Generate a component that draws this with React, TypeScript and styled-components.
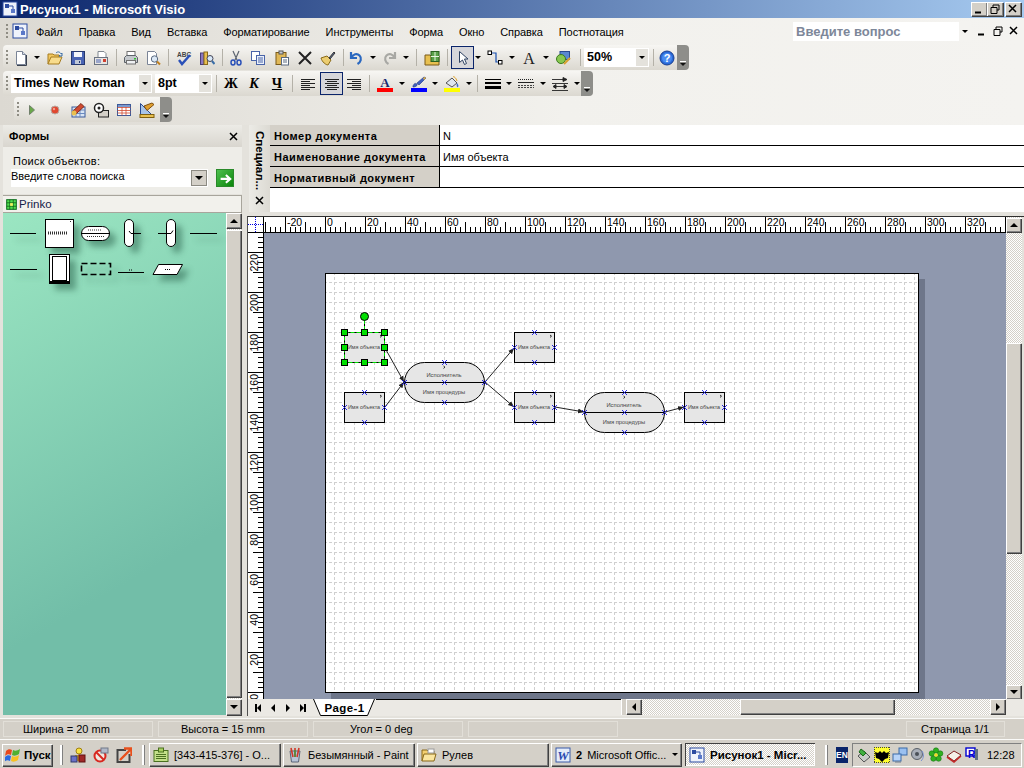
import React from 'react';
import styled, { createGlobalStyle, css } from 'styled-components';

const UI = `"Liberation Sans", Arial, sans-serif`;

const GlobalStyle = createGlobalStyle`
  html, body { margin: 0; padding: 0; }
  body { font-family: ${UI}; font-size: 11px; color: #000; overflow: hidden; }
  * { box-sizing: border-box; }
`;

const bevel = css`
  background-color: #d4d0c8;
  box-shadow: inset 1px 1px 0 #fff, inset -1px -1px 0 #808080, 1px 1px 0 #404040;
`;

const dither = css`
  background: repeating-conic-gradient(#d4d0c8 0 25%, #fff 0 50%) 0 0 / 2px 2px;
`;

// ---------- icons ----------
const ICONS: Record<string, React.ReactNode> = {
  visio: (<><rect x="1" y="1" width="14" height="14" fill="#eef2fb" stroke="#2b4aa0" /><rect x="3" y="3" width="4" height="4" fill="#2b4aa0" /><rect x="9" y="8" width="4" height="4" fill="#5a78c8" /><path d="M7 5h4v3" fill="none" stroke="#2b4aa0" /></>),
  new: (<><path d="M3.5 1.5h6l3 3v10h-9z" fill="#fff" stroke="#7a8496" /><path d="M9.5 1.5v3h3" fill="#d8deea" stroke="#7a8496" /><path d="M13.5 5v10.5H4" fill="none" stroke="#39414f" /></>),
  open: (<><path d="M1 14V4h5l1 1h5v2" fill="#f2c860" stroke="#a67c20" /><path d="M1 14l3-7h11l-3 7z" fill="#f8dc8c" stroke="#a67c20" /><path d="M9 3c2-2 4-1 5 1l1-1v3h-3l1-1" fill="none" stroke="#3a6ea8" /></>),
  save: (<><rect x="1.5" y="1.5" width="13" height="13" fill="#4a64b4" stroke="#26386e" /><rect x="4" y="2" width="8" height="5" fill="#f4f6fb" /><rect x="5" y="10" width="6" height="4" fill="#c0c8d8" /><rect x="9" y="11" width="1" height="2" fill="#26386e" /></>),
  mail: (<><path d="M5 1.5h6l2 2v4H5z" fill="#fff" stroke="#808890" /><rect x="1.5" y="7.5" width="13" height="7" fill="#e8e6e2" stroke="#6a7280" /><path d="M3 10h5M3 12h5" stroke="#4a64b4" /><rect x="10" y="9" width="3" height="3" fill="#d04030" /></>),
  print: (<><rect x="4" y="1.5" width="8" height="5" fill="#fff" stroke="#707070" /><path d="M1.5 7.5l2-2h9l2 2v5h-13z" fill="#c4c8cc" stroke="#5c6268" /><rect x="3.5" y="10.5" width="9" height="3.5" fill="#eef0f2" stroke="#707070" /><rect x="11" y="8" width="2" height="1.5" fill="#30c030" /></>),
  preview: (<><path d="M2.5 1.5h7l2 2v11h-9z" fill="#fff" stroke="#7a8496" /><circle cx="9.5" cy="9" r="3.2" fill="#dbe8f6" stroke="#5a6a80" /><path d="M12 11.5l3 3" stroke="#c08020" strokeWidth="2" /></>),
  spell: (<><text x="1" y="6.5" fontSize="6.5" fontWeight="700" fontFamily={UI} fill="#444">ABC</text><path d="M3 10l3 4 8-9" fill="none" stroke="#2a50b8" strokeWidth="2.4" /></>),
  research: (<><rect x="1.5" y="3" width="3.5" height="11.5" fill="#8a78c0" stroke="#4a3e78" /><rect x="5" y="2" width="3.5" height="12.5" fill="#e8c050" stroke="#8a6a18" /><circle cx="11" cy="8.5" r="3" fill="#d8e8f8" stroke="#445" /><path d="M13 11l2.5 3" stroke="#3a6ea8" strokeWidth="2" /></>),
  cut: (<><path d="M5 1l4 9M11 1L7 10" stroke="#5c6470" strokeWidth="1.2" /><ellipse cx="5" cy="12.5" rx="2" ry="2.5" fill="none" stroke="#2a50b8" strokeWidth="1.5" /><ellipse cx="11" cy="12.5" rx="2" ry="2.5" fill="none" stroke="#2a50b8" strokeWidth="1.5" /></>),
  copy: (<><rect x="1.5" y="1.5" width="8" height="9" fill="#fff" stroke="#4a64a8" /><rect x="6.5" y="5.5" width="8" height="9" fill="#eaf0fa" stroke="#4a64a8" /><path d="M8 8h5M8 10h5M8 12h5" stroke="#4a64a8" /></>),
  paste: (<><rect x="2" y="2.5" width="10" height="12" fill="#e0b858" stroke="#7a5a18" /><rect x="5" y="1" width="4" height="3" fill="#c8ccd4" stroke="#555" /><rect x="7.5" y="7.5" width="7" height="7.5" fill="#fff" stroke="#5a6a80" /><path d="M9 10h4M9 12h4" stroke="#5a6a80" /></>),
  del: (<path d="M2 2l12 12M14 2L2 14" stroke="#222" strokeWidth="2" />),
  brush: (<><path d="M1 8l6-2 4 4-3 5c-2 0-6-3-7-7z" fill="#eccd70" stroke="#8a6a18" /><path d="M9 8l5-6 1 1-5 6z" fill="#5a6a90" stroke="#333" /></>),
  undo: (<path d="M3 2v6h6M3.5 8C5 4 9 3 11.5 5.5s1.5 6.5-2 8.5" fill="none" stroke="#2a68c0" strokeWidth="2.2" />),
  redo: (<path d="M13 2v6H7M12.5 8C11 4 7 3 4.5 5.5s-1.5 6.5 2 8.5" fill="none" stroke="#a8a8a4" strokeWidth="2.2" />),
  shapes: (<><path d="M1 15V5h5l1 1h8v9z" fill="#e8c050" stroke="#7a5a18" /><rect x="7" y="1.5" width="8" height="10" fill="#5aa048" stroke="#2a6020" /><path d="M11 2v9M7 6.5h8" stroke="#e8f4e0" /></>),
  pointer: (<path d="M4.5 1.5v11l3-2.5 2 4.5 2-1-2-4.5h3.5z" fill="#fff" stroke="#2c4060" />),
  connector: (<><path d="M3 3h6v9h3" fill="none" stroke="#1a50b0" strokeWidth="1.2" /><rect x="1" y="1" width="3.5" height="3.5" fill="#fff" stroke="#000" /><rect x="11.5" y="10.5" width="3.5" height="3.5" fill="#fff" stroke="#000" /></>),
  textA: (<text x="8" y="14" textAnchor="middle" fontSize="16" fontFamily={`"Liberation Serif", serif`} fill="#222">A</text>),
  shape: (<><rect x="5" y="1.5" width="9.5" height="8" fill="#5a88d0" stroke="#2a4a90" /><circle cx="6" cy="9" r="4.5" fill="#88c850" stroke="#3a7a20" /><path d="M9 14l6-6" stroke="#d8a030" strokeWidth="2" /></>),
  help: (<><circle cx="8" cy="8" r="7" fill="#2a6ad8" stroke="#1a3e90" /><circle cx="8" cy="8" r="5" fill="#4a8cf0" /><text x="8" y="12" textAnchor="middle" fontSize="11" fontWeight="700" fontFamily={UI} fill="#fff">?</text></>),
  alignL: (<path d="M1 3.5h14M1 5.5h9M1 7.5h14M1 9.5h9M1 11.5h14M1 13.5h9" stroke="#222" />),
  alignC: (<path d="M1 3.5h14M3 5.5h10M1 7.5h14M3 9.5h10M1 11.5h14M3 13.5h10" stroke="#222" />),
  alignR: (<path d="M1 3.5h14M6 5.5h9M1 7.5h14M6 9.5h9M1 11.5h14M6 13.5h9" stroke="#222" />),
  colorA: (<><text x="8" y="10.5" textAnchor="middle" fontSize="13" fontWeight="700" fontFamily={`"Liberation Serif", serif`} fill="#1a2a70">A</text><rect x="0" y="12" width="16" height="4" fill="#f00" /></>),
  lineColor: (<><path d="M2 10c1-3 3-3 4-2s-1 3-4 3zM6 7l7-6 2 1-7 7z" fill="#4060c0" stroke="#284090" strokeWidth=".7" /><path d="M12 2l2-1 1 1-2 2z" fill="#e0b040" /><rect x="0" y="12" width="16" height="4" fill="#00f" /></>),
  fill: (<><path d="M2 7l6-5 5 5-5 4z" fill="#dfe6ee" stroke="#555" /><path d="M13 7c1 1 2 3 1 4s-2-2-1-4z" fill="#3a70c8" /><path d="M9 1c1-1 3 1 4 4" fill="none" stroke="#e0a020" /><rect x="0" y="12" width="16" height="4" fill="#ff0" /></>),
  weight: (<><rect x="0" y="3" width="16" height="1" fill="#000" /><rect x="0" y="6" width="16" height="2" fill="#000" /><rect x="0" y="10" width="16" height="3" fill="#000" /></>),
  dash: (<><path d="M0 3.5h16" stroke="#222" strokeDasharray="1 1" /><path d="M0 6.5h16" stroke="#222" /><path d="M0 9.5h16M0 11.5h16" stroke="#444" strokeDasharray="2 1" /></>),
  arrows: (<path d="M0 3.5h14M11 1.5l4 2-4 2zM0 7.5h16M2 10.5h12M4 8.5l-3 2 3 2zM12 8.5l3 2-3 2zM0 14.5h16" stroke="#222" fill="#222" strokeWidth=".9" />),
  play: (<path d="M5.5 3.5l5 4.5-5 4.5z" fill="#6aa84a" stroke="#70806a" />),
  record: (<><circle cx="8" cy="8" r="4" fill="#e04830" stroke="#b8a8a0" /><circle cx="7" cy="7" r="1.2" fill="#f0a090" /></>),
  macro: (<><rect x="2" y="5" width="13" height="10" fill="#d8e4f4" stroke="#3a5a9a" /><path d="M2 8h13M6 8v7M10 8v7M2 11.5h13" stroke="#6a8ac0" /><path d="M2 10L11 1.5l3 3L6 12z" fill="#d04a30" stroke="#802818" /><circle cx="4" cy="11" r="2.5" fill="#e8c050" /></>),
  rotate: (<><rect x="5.5" y="8.5" width="10" height="6.5" fill="#d4d0c8" stroke="#222" /><circle cx="6" cy="6" r="4.5" fill="#fff" stroke="#222" strokeWidth="1.5" /><circle cx="6" cy="6" r="1.5" fill="#222" /></>),
  table: (<><rect x="1.5" y="2.5" width="13" height="11" fill="#fff" stroke="#3a5a9a" /><path d="M1.5 5.5h13M1.5 8.5h13M1.5 11h13M6 2.5v11M10 2.5v11" stroke="#d04a30" strokeWidth=".8" /><rect x="2" y="3" width="12" height="2" fill="#7a9ad0" /></>),
  ruler: (<><path d="M1.5 1.5v11h11z" fill="#a8c4e8" stroke="#2a4a90" /><path d="M5 4l8-3 2 1.5-7 6z" fill="#e0a030" stroke="#805010" /><rect x="1" y="12.5" width="14" height="3" fill="#e8c050" stroke="#806010" /></>),
  grid: (<><rect x="1" y="1" width="14" height="14" fill="#50e050" stroke="#107020" strokeWidth="1.5" /><path d="M1 5.5h14M1 10.5h14M5.5 1v14M10.5 1v14" stroke="#0a5010" /><rect x="6" y="6" width="4" height="4" fill="#f0f060" /></>),
  go: (<path d="M3 9h10M9 4.5L14 9l-5 4.5" fill="none" stroke="#fff" strokeWidth="2.4" />),
  flag: (<><path d="M1 4c2-2 4-2 6-1l-1 5C4 7 2 7 0 9z" fill="#e8481c" /><path d="M8 3c2 1 4 1 7-1l-1 5c-3 2-5 2-7 1z" fill="#50b030" /><path d="M0 10c2-2 4-2 6-1l-1 5c-2-1-4-1-6 1z" fill="#2a6ae0" /><path d="M7 9c2 1 4 1 7-1l-1 5c-3 2-5 2-7 1z" fill="#f8c020" /></>),
  people: (<><circle cx="9" cy="4" r="3" fill="#f8e040" stroke="#a08010" /><path d="M5 8h7l1 6H4z" fill="#d8a020" /><rect x="1" y="9" width="6" height="6" fill="#6a70c8" stroke="#30386a" /><rect x="9" y="8" width="6" height="7" fill="#a02828" stroke="#601010" /></>),
  noSign: (<><circle cx="7" cy="9" r="5.5" fill="#f0e8e0" stroke="#d82820" strokeWidth="2" /><path d="M3 5l8 8" stroke="#d82820" strokeWidth="2" /><rect x="8" y="1" width="7" height="5" fill="#b0b8c8" stroke="#707888" /></>),
  arrowBox: (<><path d="M10 3H1.5v12h12V7" fill="none" stroke="#444" strokeWidth="2" /><path d="M4 13L15 2M8 1.5h7.5V9" fill="none" stroke="#e8501c" strokeWidth="2.4" /></>),
  note: (<><rect x="1" y="3.5" width="14" height="11" fill="#c4e08a" stroke="#4a7020" /><rect x="5.5" y="1" width="5" height="4" fill="#a8d060" stroke="#4a7020" /><path d="M3 7.5h10M3 9.5h10M3 11.5h10" stroke="#4a7020" /></>),
  paint: (<><path d="M3 4h10l-1.5 11h-7z" fill="#b8c4d8" stroke="#5a6478" /><path d="M6 10L4 1M8 10V1M10 10l2-9" stroke="#d03828" strokeWidth="1.6" /><path d="M8 10V3" stroke="#30a040" strokeWidth="1.4" /></>),
  folder: (<><path d="M1 14V3h5l1 1h6v3" fill="#f4d070" stroke="#8a6818" /><path d="M1 14l2-7h12l-2 7z" fill="#fbe6a0" stroke="#8a6818" /><rect x="7" y="2" width="6" height="4" fill="#fff" stroke="#999" /></>),
  word: (<><rect x="1" y="1" width="14" height="14" fill="#e4ecfa" stroke="#3a5aa8" /><text x="8" y="12.5" textAnchor="middle" fontSize="13" fontWeight="700" fontStyle="italic" fontFamily={`"Liberation Serif", serif`} fill="#2a4ab0">W</text></>),
  plug: (<><path d="M2 9l6 6 6-5-6-6z" fill="#c8ccc8" stroke="#555" /><path d="M5 2l5 4-3 3-4-4z" fill="#40b040" stroke="#1a6a1a" /></>),
  bat: (<><rect x="0" y="0" width="16" height="16" fill="#ffff30" /><path d="M1 5l3 1 2-2 2 2 2-2 2 2 3-1-1 6-3 1-3 3-3-3-3-1z" fill="#000" /><path d="M0 .5h16M0 15.5h16M.5 0v16M15.5 0v16" stroke="#444" strokeDasharray="1 1" /></>),
  net: (<><rect x="7" y="1" width="8" height="7" fill="#9ac0f0" stroke="#3a6aa8" /><rect x="1" y="7" width="8" height="7" fill="#b8d4f8" stroke="#3a6aa8" /><path d="M3 15h6" stroke="#6a7a90" /></>),
  speaker: (<><circle cx="7" cy="7" r="5.5" fill="#a8aeb8" stroke="#5a6068" /><circle cx="7" cy="7" r="2" fill="#4a5058" /><path d="M12 4c2 3 2 7-1 10" fill="none" stroke="#7a90d0" /></>),
  icq: (<><g fill="#30b020" stroke="#0a6a0a" strokeWidth=".5"><circle cx="8" cy="3.5" r="2.7" /><circle cx="12.2" cy="6.5" r="2.7" /><circle cx="10.6" cy="11.6" r="2.7" /><circle cx="5.4" cy="11.6" r="2.7" /><circle cx="3.8" cy="6.5" r="2.7" /></g><circle cx="8" cy="8" r="1.8" fill="#f0e020" /></>),
  book: (<><path d="M1 9l7-5 7 4-7 6z" fill="#f4f0e8" stroke="#802020" /><path d="M1 10l7 5 7-6" fill="none" stroke="#c02828" strokeWidth="1.6" /></>),
  pc: (<><rect x="2" y="1" width="9" height="8" fill="#fff" stroke="#0000d0" strokeWidth="1.4" /><text x="4" y="11" fontSize="10" fontWeight="700" fontFamily={UI} fill="#0000d0">R</text><rect x="11" y="2" width="3" height="11" fill="#607080" /></>),
};

const Svg = styled.svg<{ $s: number }>`
  display: block;
  flex: none;
  width: ${(p) => p.$s}px;
  height: ${(p) => p.$s}px;
`;

const Icon = ({ name, size = 16 }: { name: string; size?: number }) => (
  <Svg $s={size} viewBox="0 0 16 16">{ICONS[name]}</Svg>
);

// ---------- title and menu ----------
const Window = styled.div`
  display: flex;
  flex-direction: column;
  width: 1024px;
  height: 768px;
  overflow: hidden;
  background: #e4e2dc;
`;

const TitleBar = styled.div`
  display: flex;
  align-items: center;
  height: 18px;
  flex: none;
  padding-left: 2px;
  background: linear-gradient(90deg, #0a246a, #a6caf0);
  color: #fff;
  font-weight: 700;
  font-size: 13px;
`;

const TitleText = styled.span`
  margin-left: 2px;
`;

const CaptionButtons = styled.div`
  display: flex;
  margin-left: auto;
  margin-right: 3px;
`;

const CaptionButton = styled.div<{ $gap?: number }>`
  ${bevel}
  width: 16px;
  height: 14px;
  margin-left: ${(p) => p.$gap ?? 0}px;
  display: flex;
  align-items: center;
  justify-content: center;
`;

const TopArea = styled.div`
  flex: none;
  height: 107px;
  background: linear-gradient(90deg, #dcd9d2, #f2f1ed 55%, #f4f3f0);
`;

const MenuBar = styled.div`
  display: flex;
  align-items: center;
  height: 26px;
  padding-left: 6px;
`;

const MenuIcon = styled.div`
  margin: 0 0 0 2px;
`;

const MenuItem = styled.span`
  padding: 0 8px;
  margin-top: 2px;
  font-size: 11px;
  letter-spacing: -0.09px;
`;

const HelpBox = styled.div`
  display: flex;
  align-items: center;
  width: 178px;
  height: 19px;
  margin-left: auto;
  background: #fff;
  color: #7d8799;
  font-weight: 700;
  font-size: 13px;
  padding-left: 3px;
`;

const HelpDrop = styled.div`
  display: flex;
  align-items: center;
  justify-content: center;
  margin-left: auto;
  width: 12px;
  height: 19px;
  background: #f4f3f0;
`;

const DocButtons = styled.div`
  display: flex;
  align-items: center;
  width: 53px;
  padding-left: 6px;
  gap: 6px;
`;

const ToolRow = styled.div<{ $left: number; $width: number; $top?: number }>`
  display: flex;
  align-items: center;
  height: 25px;
  width: ${(p) => p.$width}px;
  margin: ${(p) => p.$top ?? 0}px 0 1px ${(p) => p.$left}px;
  padding-left: 3px;
  border-radius: 4px;
  background: linear-gradient(180deg, #f7f6f3, #dbd8d0);
`;

const Grip = styled.div`
  flex: none;
  width: 4px;
  height: 15px;
  background: repeating-linear-gradient(180deg, #8f8d84 0 2px, transparent 2px 4px) 0 0 / 2px 100% no-repeat;
`;

const ToolButton = styled.div<{ $w: number; $on?: boolean }>`
  flex: none;
  display: flex;
  align-items: center;
  justify-content: center;
  width: ${(p) => p.$w}px;
  height: 23px;
  ${(p) => p.$on && 'border: 1px solid #0a246a; background: #d6d6da;'}
`;

const Sep = styled.div<{ $w?: number }>`
  flex: none;
  width: ${(p) => p.$w ?? 8}px;
  height: 17px;
  background: linear-gradient(#b4b1a8, #b4b1a8) center / 1px 100% no-repeat;
`;

const Arrow = styled.i<{ $push?: boolean }>`
  display: block;
  flex: none;
  width: 0;
  height: 0;
  border-left: 3px solid transparent;
  border-right: 3px solid transparent;
  border-top: 3px solid #000;
  ${(p) => p.$push && 'margin: 0 3px 0 auto;'}
`;

const Drop = styled.div<{ $w?: number }>`
  flex: none;
  display: flex;
  align-items: center;
  justify-content: center;
  width: ${(p) => p.$w ?? 8}px;
  height: 23px;
`;

const Combo = styled.div<{ $w: number; $left?: number }>`
  flex: none;
  display: flex;
  align-items: center;
  width: ${(p) => p.$w}px;
  height: 19px;
  margin-left: ${(p) => p.$left ?? 0}px;
  padding: 0 0 1px 3px;
  background: #fff;
  font-weight: 700;
  font-size: 12.5px;
  line-height: 15px;
`;

const ComboDrop = styled.div`
  display: flex;
  align-items: center;
  justify-content: center;
  width: 12px;
  height: 17px;
  margin: 1px 1px 0 auto;
  background: #e4e2dc;
`;

const Chevron = styled.div`
  flex: none;
  display: flex;
  flex-direction: column;
  align-items: center;
  justify-content: flex-end;
  gap: 1px;
  width: 12px;
  height: 25px;
  margin-left: auto;
  padding-bottom: 4px;
  background: #8e8e8a;
  border-radius: 0 4px 4px 0;
  &::before {
    content: '';
    width: 6px;
    height: 1px;
    background: #fff;
  }
  &::after {
    content: '';
    border-left: 3px solid transparent;
    border-right: 3px solid transparent;
    border-top: 3px solid #111;
  }
`;

const Glyph = styled.span<{ $italic?: boolean; $under?: boolean }>`
  font-family: "Liberation Serif", serif;
  font-weight: 700;
  font-size: 14px;
  font-style: ${(p) => (p.$italic ? 'italic' : 'normal')};
  text-decoration: ${(p) => (p.$under ? 'underline' : 'none')};
`;

const T = ({ i, w = 23, on }: { i: string; w?: number; on?: boolean }) => (
  <ToolButton $w={w} $on={on}><Icon name={i} /></ToolButton>
);
const D = ({ w }: { w?: number }) => (
  <Drop $w={w}><Arrow /></Drop>
);

// ---------- main layout ----------
const Main = styled.div`
  flex: none;
  display: flex;
  height: 593px;
`;

const ShapesPanel = styled.div`
  flex: none;
  display: flex;
  flex-direction: column;
  width: 239px;
  height: 590px;
  margin-left: 3px;
`;

const PanelHeader = styled.div`
  display: flex;
  align-items: center;
  justify-content: space-between;
  height: 22px;
  flex: none;
  padding: 0 4px 0 6px;
  font-weight: 700;
  background: linear-gradient(180deg, #ecebe6, #d9d6cf);
`;

const CloseMark = styled.svg`
  display: block;
  width: 9px;
  height: 9px;
`;

const Close = () => (
  <CloseMark viewBox="0 0 9 9"><path d="M1 1l7 7M8 1L1 8" stroke="#000" strokeWidth="1.5" /></CloseMark>
);

const SearchBox = styled.div`
  flex: none;
  height: 47px;
  padding: 8px 0 0 8px;
  background: #eeede8;
`;

const SearchLabel = styled.div`
  margin: 0 0 1px 2px;
  height: 13px;
  line-height: 13px;
  font-size: 11px;
  letter-spacing: 0.25px;
`;

const SearchRow = styled.div`
  display: flex;
  align-items: center;
`;

const SearchInput = styled.div`
  display: flex;
  align-items: center;
  width: 197px;
  height: 18px;
  background: #fff;
  font-size: 11px;
`;

const SearchDrop = styled.div`
  display: flex;
  align-items: center;
  justify-content: center;
  width: 16px;
  height: 16px;
  margin: 0 1px 0 auto;
  border: 1px solid #8c8a82;
  background: #d4d0c8;
`;

const SearchText = styled.span`
  margin-bottom: 4px;
`;

const BigArrow = styled(Arrow)`
  border-left-width: 4px;
  border-right-width: 4px;
  border-top-width: 4px;
`;

const GoButton = styled.div`
  width: 18px;
  height: 18px;
  margin-left: 8px;
  display: flex;
  align-items: center;
  justify-content: center;
  border: 1px solid #2a8a2a;
  background: linear-gradient(135deg, #4ec04e, #0c860c);
`;

const StencilTab = styled.div`
  flex: none;
  display: flex;
  align-items: center;
  gap: 2px;
  height: 18px;
  margin-top: 1px;
  padding-left: 3px;
  background: #f2f1ec;
  border: 1px solid #a8a59c;
  border-width: 1px 1px 1px 0;
  color: #15204a;
  font-size: 11.5px;
`;

const StencilArea = styled.div`
  flex: 1;
  display: flex;
  min-height: 0;
`;

const Masters = styled.div`
  flex: 1;
  display: flex;
  flex-wrap: wrap;
  align-content: flex-start;
  padding: 2px 0 0 2px;
  background: linear-gradient(150deg, #9be6c2, #72bea8 70%);
`;

const Master = styled.svg`
  display: block;
  width: 36px;
  height: 36px;
  overflow: visible;
  filter: drop-shadow(6px 6px 3px rgba(20, 70, 50, 0.42));
`;

const ScrollV = styled.div<{ $top?: number }>`
  flex: none;
  display: flex;
  flex-direction: column;
  width: 16px;
  padding-top: ${(p) => p.$top ?? 0}px;
  ${dither}
`;

const ScrollBtn = styled.div<{ $h?: number; $w?: number }>`
  ${bevel}
  flex: none;
  display: flex;
  align-items: center;
  justify-content: center;
  width: ${(p) => p.$w ?? 15}px;
  height: ${(p) => p.$h ?? 15}px;
`;

const ScrollThumb = styled.div<{ $h: number }>`
  ${bevel}
  flex: none;
  width: 15px;
  height: ${(p) => p.$h}px;
`;

const Spring = styled.div<{ $size?: number }>`
  ${(p) => (p.$size ? `flex: 0 0 ${p.$size}px;` : 'flex: 1;')}
`;

const Tri = styled.i<{ $dir: 'up' | 'down' | 'left' | 'right' }>`
  display: block;
  width: 0;
  height: 0;
  ${(p) =>
    p.$dir === 'up' || p.$dir === 'down'
      ? `border-left: 4px solid transparent; border-right: 4px solid transparent; border-${p.$dir === 'up' ? 'bottom' : 'top'}: 4px solid #000;`
      : `border-top: 4px solid transparent; border-bottom: 4px solid transparent; border-${p.$dir === 'left' ? 'right' : 'left'}: 4px solid #000;`}
`;

const NavBar = styled.i`
  display: block;
  width: 2px;
  height: 8px;
  background: #000;
`;

const Work = styled.div`
  flex: none;
  display: flex;
  flex-direction: column;
  width: 777px;
  margin-left: 5px;
`;

const PropsWindow = styled.div`
  flex: none;
  display: flex;
  height: 87px;
  margin: 0 0 4px 2px;
`;

const PropsTab = styled.div`
  flex: none;
  display: flex;
  flex-direction: column;
  align-items: center;
  width: 21px;
  padding-top: 6px;
  background: linear-gradient(90deg, #ecebe6, #dcdad3);
`;

const PropsTabText = styled.div`
  writing-mode: vertical-rl;
  height: 64px;
  font-weight: 700;
  font-size: 11.5px;
`;

const PropsTabClose = styled.div`
  margin-bottom: 7px;
`;

const PropsGrid = styled.div`
  flex: 1;
  background: #fff;
`;

const PropsRow = styled.div`
  display: grid;
  grid-template-columns: 169px 1fr;
  height: 21px;
  border-bottom: 1px solid #000;
`;

const PropsLabel = styled.div`
  display: flex;
  align-items: center;
  padding: 1px 0 0 4px;
  background: #d4d0c8;
  font-weight: 700;
  font-size: 11px;
  letter-spacing: 0.48px;
`;

const PropsValue = styled.div`
  display: flex;
  align-items: center;
  padding: 1px 0 0 3px;
  border-left: 1px solid #000;
  font-size: 11px;
`;

const Frame = styled.div`
  flex: none;
  display: grid;
  grid-template-columns: 16px 742px 16px 2px;
  grid-template-rows: 16px 466px 17px;
  border-left: 1px solid #505050;
  border-top: 1px solid #303030;
`;

const Corner = styled.svg`
  display: block;
  width: 16px;
  height: 16px;
  background: #fff;
`;

const RulerH = styled.svg`
  display: block;
  width: 742px;
  height: 16px;
  background: #fff;
`;

const RulerV = styled.svg`
  display: block;
  width: 16px;
  height: 466px;
  background: #fff;
`;

const Canvas = styled.div`
  background: #8f98ae;
  padding: 40px 0 0 61px;
  overflow: hidden;
`;

const Page = styled.svg`
  display: block;
  width: 594px;
  height: 420px;
  background: #fff;
  box-shadow: 6px 6px 0 #6e768a;
`;

const VScrollCell = styled(ScrollV)`
  grid-column: 3;
  grid-row: 1 / span 2;
`;

const TabsRow = styled.div`
  flex: none;
  display: flex;
  align-items: center;
  width: 373px;
  padding-left: 2px;
  background: #ebe9e4;
`;

const NavButton = styled.div`
  display: flex;
  align-items: center;
  justify-content: center;
  width: 15px;
  height: 16px;
`;

const PageTab = styled.div`
  position: relative;
  display: flex;
  align-items: center;
  justify-content: center;
  width: 63px;
  height: 17px;
  margin-left: 3px;
  font-weight: 700;
  font-size: 11.5px;
  letter-spacing: 0.4px;
`;

const PageTabShape = styled.svg`
  position: absolute;
  inset: 0;
  width: 63px;
  height: 17px;
`;

const PageTabText = styled.span`
  position: relative;
`;

const TabsFill = styled.div`
  flex: 1;
  height: 17px;
  border-top: 1px solid #000;
`;

const TabsSplit = styled.div`
  flex: none;
  width: 5px;
  height: 16px;
  background: #d4d0c8;
  border-left: 1px solid #fff;
`;

const HScroll = styled.div`
  flex: none;
  display: flex;
  width: 379px;
  height: 16px;
  ${dither}
`;

const BottomRow = styled.div`
  grid-column: 1 / span 4;
  display: flex;
  background: #ebe9e4;
`;

const HThumb = styled.div`
  ${bevel}
  flex: none;
  width: 154px;
  height: 15px;
`;

// ---------- status and task bars ----------
const StatusBar = styled.div`
  flex: none;
  display: flex;
  align-items: center;
  gap: 5px;
  height: 22px;
  padding: 0 19px 0 3px;
  background: #d4d0c8;
  border-top: 1px solid #fafaf8;
  border-bottom: 1px solid #fafaf8;
`;

const StatusCell = styled.div<{ $w: number; $pad: number; $end?: boolean }>`
  flex: none;
  display: flex;
  align-items: center;
  width: ${(p) => p.$w}px;
  height: 16px;
  padding-left: ${(p) => p.$pad}px;
  margin-left: ${(p) => (p.$end ? 'auto' : '0')};
  border: 1px solid #e2dfd8;
  font-size: 11px;
`;

const TaskBar = styled.div`
  flex: none;
  display: flex;
  align-items: center;
  height: 28px;
  padding: 1px 0 0 2px;
  background: #d4d0c8;
`;

const StartButton = styled.div`
  ${bevel}
  flex: none;
  display: flex;
  align-items: center;
  gap: 3px;
  width: 50px;
  height: 22px;
  padding-left: 3px;
  font-weight: 700;
  font-size: 11.5px;
`;

const TaskGrip = styled.div<{ $l: number; $r: number }>`
  flex: none;
  width: 2px;
  height: 20px;
  margin: 0 ${(p) => p.$r}px 0 ${(p) => p.$l}px;
  background: #fff;
  box-shadow: 1px 0 0 #808080;
`;

const QuickLaunch = styled.div`
  display: flex;
  gap: 7px;
`;

const TaskButtons = styled.div`
  display: flex;
  gap: 3px;
`;

const TaskButton = styled.div<{ $w: number; $active?: boolean }>`
  ${bevel}
  flex: none;
  display: flex;
  align-items: center;
  gap: 5px;
  width: ${(p) => p.$w}px;
  height: 23px;
  padding-left: 4px;
  font-size: 11px;
  white-space: nowrap;
  overflow: hidden;
  ${(p) =>
    p.$active &&
    css`
      ${dither}
      margin-left: 1px;
      box-shadow: inset 1px 1px 0 #404040, inset -1px -1px 0 #fff;
      font-weight: 700;
      font-size: 11.5px;
    `}
`;

const LangBox = styled.div`
  flex: none;
  width: 12px;
  height: 16px;
  margin: 0 4px 0 9px;
  background: #0a246a;
  color: #fff;
  font-weight: 700;
  font-size: 8.5px;
  line-height: 16px;
  text-align: center;
`;

const Tray = styled.div`
  flex: none;
  display: flex;
  align-items: center;
  width: 170px;
  height: 24px;
  padding-left: 2px;
  border: 1px solid;
  border-color: #808080 #fff #fff #808080;
`;

const TrayIcon = styled.div`
  flex: none;
  display: flex;
  justify-content: center;
  width: 18px;
`;

const Clock = styled.span`
  margin-left: 6px;
  font-size: 11px;
`;

// ---------- diagram ----------
const Label = ({ x, y, size, children }: { x: number; y: number; size: number; children: string }) => (
  <text x={x} y={y} fontSize={size} textAnchor="middle" fontFamily={UI} fill="#444">{children}</text>
);

const Cross = ({ x, y }: { x: number; y: number }) => (
  <path d={`M${x - 2.5} ${y - 2.5}l5 5M${x + 2.5} ${y - 2.5}l-5 5`} stroke="#1414e0" strokeWidth=".9" />
);

const Mark = ({ x, y }: { x: number; y: number }) => (
  <path d={`M${x} ${y}l1.5 1.2-1.5 1.2`} stroke="#000" strokeWidth=".8" fill="none" />
);

const Box = ({ x, y, crosses = true }: { x: number; y: number; crosses?: boolean }) => (
  <g>
    <rect x={x + 0.5} y={y + 0.5} width={40} height={30} fill="#e6e6e6" stroke={crosses ? '#000' : 'none'} />
    <Mark x={x + 36} y={y + 3} />
    <Label x={x + 20} y={y + 17} size={5.4}>Имя объекта</Label>
    {crosses && (
      <>
        <Cross x={x + 20.5} y={y + 0.5} />
        <Cross x={x + 20.5} y={y + 30.5} />
        <Cross x={x + 0.5} y={y + 15.5} />
        <Cross x={x + 40.5} y={y + 15.5} />
      </>
    )}
  </g>
);

const Oval = ({ x, y }: { x: number; y: number }) => (
  <g>
    <rect x={x + 0.5} y={y + 0.5} width={80} height={40} rx={20} fill="#e6e6e6" stroke="#000" />
    <path d={`M${x} ${y + 20.5}h81`} stroke="#000" />
    <Label x={x + 40} y={y + 15} size={5.8}>Исполнитель</Label>
    <Label x={x + 40} y={y + 32} size={5.8}>Имя процедуры</Label>
    <Mark x={x + 39.5} y={y + 4} />
    <Cross x={x + 40.5} y={y + 0.5} />
    <Cross x={x + 40.5} y={y + 20.5} />
    <Cross x={x + 40.5} y={y + 40.5} />
    <Cross x={x + 0.5} y={y + 20.5} />
    <Cross x={x + 80.5} y={y + 20.5} />
  </g>
);

const Link = ({ x1, y1, x2, y2 }: { x1: number; y1: number; x2: number; y2: number }) => (
  <path d={`M${x1} ${y1}L${x2} ${y2}`} stroke="#222" strokeWidth="1" markerEnd="url(#head)" />
);

const Handle = ({ x, y }: { x: number; y: number }) => (
  <rect x={x - 2.5} y={y - 2.5} width={6} height={6} fill="#00e000" stroke="#000" />
);

const HANDLES = [
  [344, 332], [364, 332], [384, 332],
  [344, 347], [384, 347],
  [344, 362], [364, 362], [384, 362],
];

const Diagram = () => (
  <Page viewBox="325 273 594 420">
    <defs>
      <pattern id="grid" x="324" y="272" width="10" height="10" patternUnits="userSpaceOnUse">
        <path d="M.5 0v10M0 .5h10" stroke="#cfcfcf" strokeDasharray="3 2" />
      </pattern>
      <marker id="head" markerWidth="7" markerHeight="6" refX="6" refY="3" orient="auto" markerUnits="userSpaceOnUse">
        <path d="M0 .5L6 3 0 5.5z" fill="#222" />
      </marker>
    </defs>
    <rect x="325" y="273" width="594" height="420" fill="url(#grid)" />
    <rect x="325" y="273" width="593" height="419" fill="none" stroke="#000" transform="translate(.5 .5)" />
    <Link x1={385} y1={348} x2={404} y2={382} />
    <Link x1={385} y1={407} x2={404} y2={382} />
    <Link x1={485} y1={382} x2={514} y2={348} />
    <Link x1={485} y1={382} x2={514} y2={407} />
    <Link x1={555} y1={407} x2={584} y2={412} />
    <Link x1={665} y1={412} x2={684} y2={407} />
    <Box x={344} y={332} crosses={false} />
    <Box x={344} y={392} />
    <Oval x={404} y={362} />
    <Box x={514} y={332} />
    <Box x={514} y={392} />
    <Oval x={584} y={392} />
    <Box x={684} y={392} />
    <path d="M364.5 320v12M344.5 332.5h40v30h-40z" fill="none" stroke="#000" />
    <path d="M364.5 320v12M344.5 332.5h40v30h-40z" fill="none" stroke="#00e000" strokeDasharray="4 2" />
    {HANDLES.map(([x, y]) => (
      <Handle key={`${x}-${y}`} x={x} y={y} />
    ))}
    <circle cx="364.5" cy="316.5" r="4" fill="#00e000" stroke="#000" />
  </Page>
);

const tickLen = (n: number) => (n % 8 === 0 ? 16 : n % 4 === 0 ? 10 : 5);

const HTicks = () => {
  const ticks = Array.from({ length: 150 }, (_, i) => i - 13);
  return (
    <RulerH viewBox="264 217 742 16">
      {ticks.map((n) => {
        const x = 325 + n * 5 + 0.5;
        return <path key={n} d={`M${x} 232V${232 - tickLen(n)}`} stroke="#000" />;
      })}
      {ticks.filter((n) => n % 8 === 0 && n * 5 + 325 < 990).map((n) => (
        <text key={n} x={325 + n * 5 + 2} y={226} fontSize="10.5" fontFamily={UI} fill="#000">{n * 2.5}</text>
      ))}
      <path d="M264 232.5h742" stroke="#000" />
    </RulerH>
  );
};

const VTicks = () => {
  const ticks = Array.from({ length: 95 }, (_, i) => i);
  return (
    <RulerV viewBox="248 233 16 466">
      {ticks.map((n) => {
        const y = 692 - n * 5 + 0.5;
        return <path key={n} d={`M263 ${y}H${263 - tickLen(n)}`} stroke="#000" />;
      })}
      {ticks.filter((n) => n % 8 === 0).map((n) => (
        <text key={n} transform={`translate(258 ${692 - n * 5 + 2}) rotate(-90)`} fontSize="10.5" fontFamily={UI} fill="#000" textAnchor="end">{n * 2.5}</text>
      ))}
      <path d="M263.5 233v466" stroke="#000" />
    </RulerV>
  );
};

const MENU = ['Файл', 'Правка', 'Вид', 'Вставка', 'Форматирование', 'Инструменты', 'Форма', 'Окно', 'Справка', 'Постнотация'];

const MinGlyph = () => (
  <svg width="10" height="10" viewBox="0 0 10 10"><path d="M1 8.5h6" stroke="#000" strokeWidth="2" /></svg>
);
const RestoreGlyph = () => (
  <svg width="10" height="10" viewBox="0 0 10 10"><path d="M3 3V1h6v5H7M1 3.5h6v6H1z" fill="none" stroke="#000" /></svg>
);
const CloseGlyph = () => (
  <svg width="10" height="10" viewBox="0 0 10 10"><path d="M1 1l7 7M8 1L1 8" stroke="#000" strokeWidth="1.5" /></svg>
);

const App: React.FC = () => {
  return (
    <Window>
      <GlobalStyle />
      <TitleBar>
        <Icon name="visio" />
        <TitleText>Рисунок1 - Microsoft Visio</TitleText>
        <CaptionButtons>
          <CaptionButton><MinGlyph /></CaptionButton>
          <CaptionButton><RestoreGlyph /></CaptionButton>
          <CaptionButton $gap={2}><CloseGlyph /></CaptionButton>
        </CaptionButtons>
      </TitleBar>

      <TopArea>
        <MenuBar>
          <Grip />
          <MenuIcon><Icon name="visio" /></MenuIcon>
          {MENU.map((m) => (
            <MenuItem key={m}>{m}</MenuItem>
          ))}
          <HelpBox>
            Введите вопрос
            <HelpDrop><Arrow /></HelpDrop>
          </HelpBox>
          <DocButtons>
            <MinGlyph /><RestoreGlyph /><CloseGlyph />
          </DocButtons>
        </MenuBar>

        <ToolRow $left={3} $width={684} $top={1}>
          <Grip />
          <T i="new" w={21} /><D w={12} />
          <T i="open" w={24} /><T i="save" w={22} /><T i="mail" /><Sep />
          <T i="print" w={21} /><T i="preview" /><Sep w={6} />
          <T i="spell" w={24} /><T i="research" w={22} /><Sep />
          <T i="cut" w={20} /><T i="copy" w={24} /><T i="paste" w={24} /><T i="del" w={22} /><T i="brush" /><Sep />
          <T i="undo" w={18} /><D w={16} /><T i="redo" w={18} /><D w={13} /><Sep />
          <T i="shapes" /><Sep w={6} />
          <T i="pointer" on /><D />
          <T i="connector" w={26} /><D />
          <T i="textA" w={26} /><D />
          <T i="shape" w={26} /><Sep w={6} />
          <Combo $w={65}>50%<ComboDrop><Arrow /></ComboDrop></Combo>
          <Sep />
          <T i="help" w={20} />
          <Chevron />
        </ToolRow>

        <ToolRow $left={3} $width={590}>
          <Grip />
          <Combo $w={141} $left={1}>Times New Roman<ComboDrop><Arrow /></ComboDrop></Combo>
          <Combo $w={57} $left={3}>8pt<ComboDrop><Arrow /></ComboDrop></Combo>
          <Sep />
          <ToolButton $w={22}><Glyph>Ж</Glyph></ToolButton>
          <ToolButton $w={24}><Glyph $italic>К</Glyph></ToolButton>
          <ToolButton $w={22}><Glyph $under>Ч</Glyph></ToolButton>
          <Sep w={6} />
          <T i="alignL" w={24} /><T i="alignC" on /><T i="alignR" w={22} /><Sep w={6} />
          <T i="colorA" w={24} /><D w={10} />
          <T i="lineColor" w={24} /><D />
          <T i="fill" w={26} /><D /><Sep />
          <T i="weight" w={24} /><D />
          <T i="dash" w={26} /><D />
          <T i="arrows" w={26} /><D />
          <Chevron />
        </ToolRow>

        <ToolRow $left={14} $width={158}>
          <Grip />
          <T i="play" w={22} /><T i="record" /><T i="macro" /><T i="rotate" /><T i="table" /><T i="ruler" />
          <Chevron />
        </ToolRow>
      </TopArea>

      <Main>
        <ShapesPanel>
          <PanelHeader>Формы<Close /></PanelHeader>
          <SearchBox>
            <SearchLabel>Поиск объектов:</SearchLabel>
            <SearchRow>
              <SearchInput>
                <SearchText>Введите слова поиска</SearchText>
                <SearchDrop><BigArrow /></SearchDrop>
              </SearchInput>
              <GoButton><Icon name="go" size={14} /></GoButton>
            </SearchRow>
          </SearchBox>
          <StencilTab><Icon name="grid" size={11} />Prinko</StencilTab>
          <StencilArea>
            <Masters>
              <Master viewBox="0 0 36 36"><path d="M5 18.5h26" stroke="#000" /></Master>
              <Master viewBox="0 0 36 36">
                <rect x="4.5" y="4.5" width="28" height="28" fill="#fff" stroke="#000" />
                <path d="M7 18h20" stroke="#333" strokeWidth="3" strokeDasharray="1 1" />
                <path d="M29 6.5h1" stroke="#333" />
              </Master>
              <Master viewBox="0 0 36 36">
                <rect x="4.5" y="11.5" width="28" height="14" rx="7" fill="#fff" stroke="#000" />
                <path d="M4 18.5h29" stroke="#000" />
                <path d="M11 15h14M10 21.5h17" stroke="#333" strokeDasharray="1 1" />
              </Master>
              <Master viewBox="0 0 36 36">
                <rect x="11.5" y="4.5" width="9" height="27" rx="4.5" fill="#fff" stroke="#000" />
                <path d="M16 16l2 2.5 10 0" fill="none" stroke="#000" />
              </Master>
              <Master viewBox="0 0 36 36">
                <rect x="17.5" y="4.5" width="9" height="27" rx="4.5" fill="#fff" stroke="#000" />
                <path d="M9 18.5h13l2-3" fill="none" stroke="#000" />
              </Master>
              <Master viewBox="0 0 36 36"><path d="M5 18.5h27" stroke="#000" /></Master>
              <Master viewBox="0 0 36 36"><path d="M5 18.5h27" stroke="#000" /></Master>
              <Master viewBox="0 0 36 36">
                <rect x="8.5" y="3.5" width="20" height="29" fill="#fff" stroke="#000" />
                <rect x="11.5" y="5.5" width="14" height="24" fill="#fff" stroke="#000" />
                <rect x="8" y="30" width="21" height="3" fill="#000" />
              </Master>
              <Master viewBox="0 0 36 36">
                <rect x="4.5" y="12.5" width="29" height="11" fill="none" stroke="#000" strokeWidth="1.6" strokeDasharray="6 3" />
              </Master>
              <Master viewBox="0 0 36 36">
                <path d="M5 21.5h26" stroke="#000" />
                <path d="M16 19h4" stroke="#000" strokeDasharray="1 1" />
              </Master>
              <Master viewBox="0 0 36 36">
                <path d="M9.5 13.5h24l-5.5 10H4z" fill="#fff" stroke="#000" />
                <path d="M16 18.5h5" stroke="#000" strokeDasharray="1 1" />
              </Master>
            </Masters>
            <ScrollV>
              <ScrollBtn $h={15}><Tri $dir="up" /></ScrollBtn>
              <Spring $size={2} />
              <ScrollThumb $h={467} />
              <Spring />
              <ScrollBtn $h={16}><Tri $dir="down" /></ScrollBtn>
            </ScrollV>
          </StencilArea>
        </ShapesPanel>

        <Work>
          <PropsWindow>
            <PropsTab>
              <PropsTabText>Специал...</PropsTabText>
              <Spring />
              <PropsTabClose><Close /></PropsTabClose>
            </PropsTab>
            <PropsGrid>
              <PropsRow><PropsLabel>Номер документа</PropsLabel><PropsValue>N</PropsValue></PropsRow>
              <PropsRow><PropsLabel>Наименование документа</PropsLabel><PropsValue>Имя объекта</PropsValue></PropsRow>
              <PropsRow><PropsLabel>Нормативный документ</PropsLabel><PropsValue /></PropsRow>
            </PropsGrid>
          </PropsWindow>

          <Frame>
            <Corner viewBox="0 0 16 16">
              <path d="M7.5 0v15M0 7.5h15" stroke="#0000e0" strokeDasharray="1 1" />
              <path d="M15.5 0v16M0 15.5h16" stroke="#000" />
            </Corner>
            <HTicks />
            <VScrollCell $top={1}>
              <ScrollBtn $h={14}><Tri $dir="up" /></ScrollBtn>
              <Spring $size={111} />
              <ScrollThumb $h={210} />
              <Spring />
              <ScrollBtn $h={14}><Tri $dir="down" /></ScrollBtn>
            </VScrollCell>
            <div />
            <VTicks />
            <Canvas><Diagram /></Canvas>
            <div />
            <BottomRow>
              <TabsRow>
                <NavButton><NavBar /><Tri $dir="left" /></NavButton>
                <NavButton><Tri $dir="left" /></NavButton>
                <NavButton><Tri $dir="right" /></NavButton>
                <NavButton><Tri $dir="right" /><NavBar /></NavButton>
                <PageTab>
                  <PageTabShape viewBox="0 0 63 17">
                    <path d="M.5 0l7 16.5h47l7-16.5" fill="#fff" stroke="#000" />
                  </PageTabShape>
                  <PageTabText>Page-1</PageTabText>
                </PageTab>
                <TabsFill />
              </TabsRow>
              <TabsSplit />
              <HScroll>
                <ScrollBtn $h={15} $w={15}><Tri $dir="left" /></ScrollBtn>
                <Spring $size={99} />
                <HThumb />
                <Spring />
                <ScrollBtn $h={15} $w={15}><Tri $dir="right" /></ScrollBtn>
              </HScroll>
            </BottomRow>
          </Frame>
        </Work>
      </Main>

      <StatusBar>
        <StatusCell $w={150} $pad={19}>Ширина = 20 mm</StatusCell>
        <StatusCell $w={150} $pad={22}>Высота = 15 mm</StatusCell>
        <StatusCell $w={150} $pad={36}>Угол = 0 deg</StatusCell>
        <StatusCell $w={150} $pad={0} />
        <StatusCell $w={99} $pad={14} $end>Страница 1/1</StatusCell>
      </StatusBar>

      <TaskBar>
        <StartButton><Icon name="flag" />Пуск</StartButton>
        <TaskGrip $l={8} $r={8} />
        <QuickLaunch>
          <Icon name="people" /><Icon name="noSign" /><Icon name="arrowBox" />
        </QuickLaunch>
        <TaskGrip $l={10} $r={5} />
        <TaskButtons>
          <TaskButton $w={131}><Icon name="note" />[343-415-376] - О...</TaskButton>
          <TaskButton $w={131}><Icon name="paint" />Безымянный - Paint</TaskButton>
          <TaskButton $w={131}><Icon name="folder" />Рулев</TaskButton>
          <TaskButton $w={130}>
            <Icon name="word" /><b>2</b> Microsoft Offic...
            <Arrow $push />
          </TaskButton>
          <TaskButton $w={130} $active><Icon name="visio" />Рисунок1 - Micr...</TaskButton>
        </TaskButtons>
        <TaskGrip $l={10} $r={0} />
        <LangBox>EN</LangBox>
        <Tray>
          {['plug', 'bat', 'net', 'speaker', 'icq', 'book', 'pc'].map((n) => (
            <TrayIcon key={n}><Icon name={n} /></TrayIcon>
          ))}
          <Clock>12:28</Clock>
        </Tray>
      </TaskBar>
    </Window>
  );
};

export default App;
